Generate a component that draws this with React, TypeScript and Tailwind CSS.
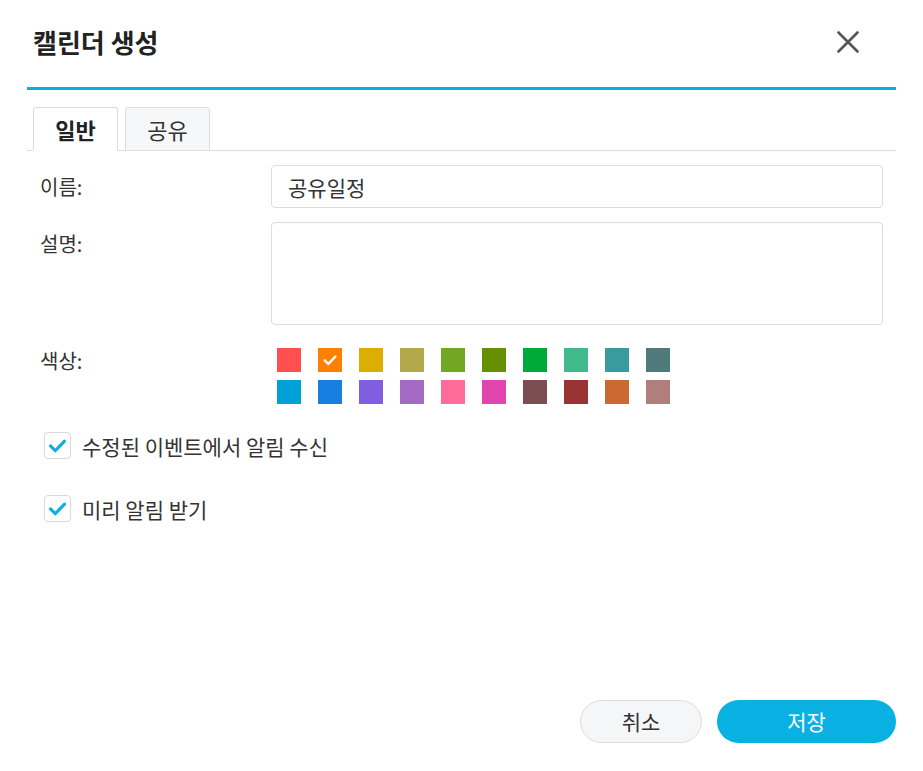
import { useState } from 'react'

const FONT = '[font-family:"Noto_Sans_CJK_KR","Noto_Sans",sans-serif]'

const SWATCHES = [
  '#ff4f4f', '#ff8000', '#dbae00', '#b3a94a', '#73a623', '#668f04', '#00aa3a', '#40b98c', '#3a9b9f', '#4f7a79',
  '#00a0d8', '#177fe0', '#7f5fe0', '#a36bc6', '#ff6b9b', '#e345ae', '#7b4f52', '#993334', '#cc6933', '#b07f7c'
]

function CheckMark({ className, weight = 3.4 }: { className?: string; weight?: number }) {
  return (
    <svg viewBox="0 0 24 24" className={className} fill="none">
      <path d="M4 12.5l5.5 5.5 10.5-11" stroke="currentColor" strokeWidth={weight} strokeLinecap="round" strokeLinejoin="round" />
    </svg>
  )
}

function CheckRow({ label, checked, onToggle }: { label: string; checked: boolean; onToggle: () => void }) {
  return (
    <label className="flex items-center gap-[11px] cursor-pointer" onClick={onToggle}>
      <span className="flex h-[27px] w-[27px] items-center justify-center rounded-[4px] border border-[#d9d9d9] bg-white">
        {checked ? <CheckMark className="h-[21px] w-[21px] text-[#12ade0]" weight={3.6} /> : null}
      </span>
      <span className="text-[21px] leading-[26px] text-[#333]">{label}</span>
    </label>
  )
}

export default function App() {
  const [tab, setTab] = useState<'general' | 'share'>('general')
  const [name, setName] = useState('공유일정')
  const [desc, setDesc] = useState('')
  const [color, setColor] = useState(1)
  const [notifyEdit, setNotifyEdit] = useState(true)
  const [notifyEarly, setNotifyEarly] = useState(true)

  return (
    <div className={`${FONT} flex h-[771px] w-[923px] flex-col bg-white px-[27px] text-[#333]`}>
      <div className="flex h-[90px] shrink-0 items-center justify-between border-b-[3px] border-[#0aaedc] pb-[3px] pl-[6px] pr-[37px]">
        <h1 className="text-[26px] leading-[32px] font-bold text-[#222]">캘린더 생성</h1>
        <button type="button" className="flex h-[22px] w-[22px] items-center justify-center">
          <svg viewBox="0 0 22 22" className="h-[22px] w-[22px]">
            <path d="M1.5 1.5l19 19M20.5 1.5l-19 19" stroke="#555" strokeWidth="2.6" strokeLinecap="round" />
          </svg>
        </button>
      </div>

      <div className="mt-[18px] flex h-[43px] shrink-0 items-end gap-[7px] border-b border-[#dcdcdc] pl-[6px]">
        <button
          type="button"
          onClick={() => setTab('general')}
          className={`-mb-px flex h-[44px] w-[85px] items-center justify-center rounded-t-[3px] border border-[#dcdcdc] text-[22px] leading-[28px] ${
            tab === 'general' ? 'border-b-white bg-white font-bold text-[#222]' : 'bg-[#f5f7f9] text-[#333]'
          }`}
        >
          일반
        </button>
        <button
          type="button"
          onClick={() => setTab('share')}
          className={`-mb-px flex h-[44px] w-[85px] items-center justify-center rounded-t-[3px] border border-[#dcdcdc] text-[22px] leading-[28px] ${
            tab === 'share' ? 'border-b-white bg-white font-bold text-[#222]' : 'border-b-[#dcdcdc] bg-[#f5f7f9] text-[#333]'
          }`}
        >
          공유
        </button>
      </div>

      <div className="flex flex-1 flex-col pl-[13px] pr-[13px]">
        <div className="mt-[14px] grid grid-cols-[231px_minmax(0,1fr)] gap-y-[14px]">
          <div className="flex h-[43px] items-center text-[20px] leading-[26px]">이름:</div>
          <input
            value={name}
            onChange={(e) => setName(e.target.value)}
            className="h-[43px] rounded-[4px] border border-[#dcdcdc] px-[16px] text-[21px] text-[#333] outline-none"
          />

          <div className="pt-[9px] text-[20px] leading-[26px]">설명:</div>
          <textarea
            value={desc}
            onChange={(e) => setDesc(e.target.value)}
            className="h-[103px] resize-none rounded-[4px] border border-[#dcdcdc] px-[16px] py-[10px] text-[21px] outline-none"
          />

          <div className="mt-[9px] text-[20px] leading-[26px]">색상:</div>
          <div className="mt-[9px] grid w-fit grid-cols-[repeat(10,24px)] gap-x-[17px] gap-y-[8px] pl-[6px]">
            {SWATCHES.map((c, i) => (
              <button
                key={c}
                type="button"
                onClick={() => setColor(i)}
                className="flex h-[24px] w-[24px] items-center justify-center"
                style={{ backgroundColor: c }}
              >
                {color === i ? <CheckMark className="h-[16px] w-[16px] text-white" weight={3.6} /> : null}
              </button>
            ))}
          </div>
        </div>

        <div className="mt-[28px] flex flex-col gap-[36px] pl-[4px]">
          <CheckRow label="수정된 이벤트에서 알림 수신" checked={notifyEdit} onToggle={() => setNotifyEdit((v) => !v)} />
          <CheckRow label="미리 알림 받기" checked={notifyEarly} onToggle={() => setNotifyEarly((v) => !v)} />
        </div>
      </div>

      <div className="mb-[28px] flex shrink-0 justify-end gap-[15px]">
        <button
          type="button"
          className="h-[43px] w-[122px] rounded-full border border-[#dcdcdc] bg-[#f5f6f8] text-[21px] text-[#333]"
        >
          취소
        </button>
        <button type="button" className="h-[43px] w-[179px] rounded-full bg-[#08b1e1] text-[21px] text-white">
          저장
        </button>
      </div>
    </div>
  )
}
